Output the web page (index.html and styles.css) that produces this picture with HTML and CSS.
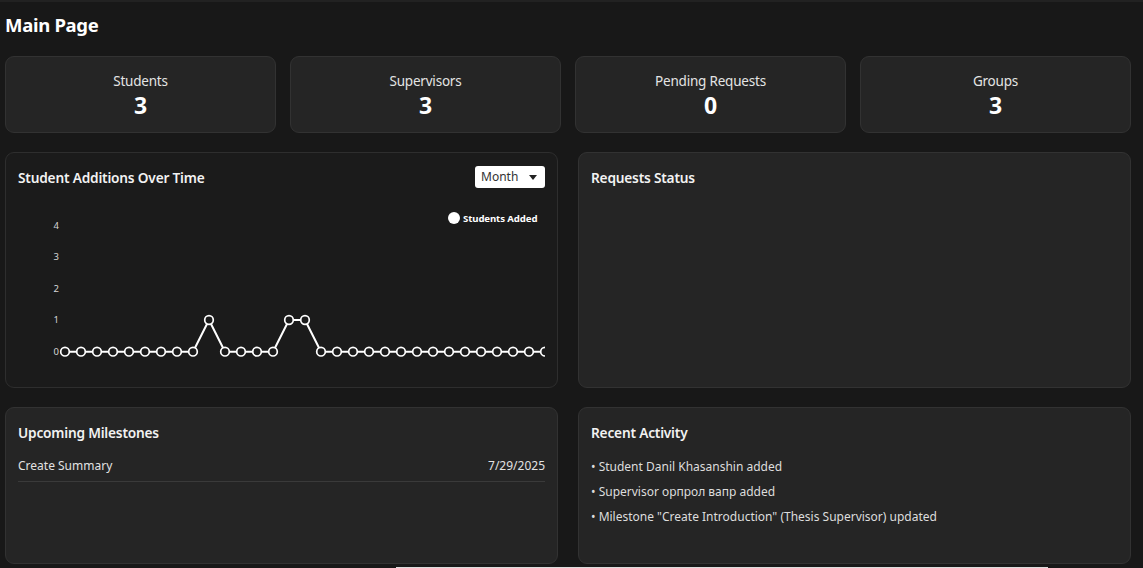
FILE: index.html
```html
<!DOCTYPE html>
<html lang="en">
<head>
<meta charset="utf-8">
<title>Main Page</title>
<link rel="stylesheet" href="styles.css">
</head>
<body>
<div class="page">
  <h1 class="page-title">Main Page</h1>

  <div class="stats">
    <div class="stat-card"><div class="stat-label">Students</div><div class="stat-value">3</div></div>
    <div class="stat-card"><div class="stat-label">Supervisors</div><div class="stat-value">3</div></div>
    <div class="stat-card"><div class="stat-label">Pending Requests</div><div class="stat-value">0</div></div>
    <div class="stat-card"><div class="stat-label">Groups</div><div class="stat-value">3</div></div>
  </div>

  <div class="row row-charts">
    <div class="card card-dark">
      <div class="card-header">
        <h2 class="card-title">Student Additions Over Time</h2>
        <div class="select">Month<span class="caret"></span></div>
      </div>
      <svg class="chart" width="527" height="186" viewBox="0 0 527 186">
        <g class="axis-labels">
          <text x="41" y="40.5">4</text>
          <text x="41" y="71.5">3</text>
          <text x="41" y="103.5">2</text>
          <text x="41" y="135">1</text>
          <text x="41" y="166.5">0</text>
        </g>
        <circle cx="436" cy="30" r="6" fill="#fff"/>
        <text class="legend" x="445" y="33.5">Students Added</text>
        <polyline class="line" points="47,163.7 63,163.7 79,163.7 95,163.7 111,163.7 127,163.7 143,163.7 159,163.7 175,163.7 191,132 207,163.7 223,163.7 239,163.7 255,163.7 271,132 287,132 303,163.7 319,163.7 335,163.7 351,163.7 367,163.7 383,163.7 399,163.7 415,163.7 431,163.7 447,163.7 463,163.7 479,163.7 495,163.7 511,163.7 527,163.7"/>
        <g class="dots">
          <circle cx="47" cy="163.7" r="4.3"/><circle cx="63" cy="163.7" r="4.3"/><circle cx="79" cy="163.7" r="4.3"/><circle cx="95" cy="163.7" r="4.3"/><circle cx="111" cy="163.7" r="4.3"/><circle cx="127" cy="163.7" r="4.3"/><circle cx="143" cy="163.7" r="4.3"/><circle cx="159" cy="163.7" r="4.3"/><circle cx="175" cy="163.7" r="4.3"/><circle cx="191" cy="132" r="4.3"/><circle cx="207" cy="163.7" r="4.3"/><circle cx="223" cy="163.7" r="4.3"/><circle cx="239" cy="163.7" r="4.3"/><circle cx="255" cy="163.7" r="4.3"/><circle cx="271" cy="132" r="4.3"/><circle cx="287" cy="132" r="4.3"/><circle cx="303" cy="163.7" r="4.3"/><circle cx="319" cy="163.7" r="4.3"/><circle cx="335" cy="163.7" r="4.3"/><circle cx="351" cy="163.7" r="4.3"/><circle cx="367" cy="163.7" r="4.3"/><circle cx="383" cy="163.7" r="4.3"/><circle cx="399" cy="163.7" r="4.3"/><circle cx="415" cy="163.7" r="4.3"/><circle cx="431" cy="163.7" r="4.3"/><circle cx="447" cy="163.7" r="4.3"/><circle cx="463" cy="163.7" r="4.3"/><circle cx="479" cy="163.7" r="4.3"/><circle cx="495" cy="163.7" r="4.3"/><circle cx="511" cy="163.7" r="4.3"/><circle cx="527" cy="163.7" r="4.3"/>
        </g>
      </svg>
    </div>
    <div class="card">
      <div class="card-header">
        <h2 class="card-title">Requests Status</h2>
      </div>
    </div>
  </div>

  <div class="row row-bottom">
    <div class="card">
      <div class="card-header">
        <h2 class="card-title">Upcoming Milestones</h2>
      </div>
      <div class="milestone">
        <span>Create Summary</span>
        <span>7/29/2025</span>
      </div>
    </div>
    <div class="card">
      <div class="card-header">
        <h2 class="card-title">Recent Activity</h2>
      </div>
      <ul class="activity">
        <li>• Student Danil Khasanshin added</li>
        <li>• Supervisor орпрол вапр added</li>
        <li>• Milestone "Create Introduction" (Thesis Supervisor) updated</li>
      </ul>
    </div>
  </div>
  <div class="bottom-bar"></div>
</div>
</body>
</html>
```

FILE: styles.css
```css
* { box-sizing: border-box; }
html, body {
  margin: 0;
  padding: 0;
  background: #181818;
  height: 100%;
  overflow: hidden;
}
body {
  font-family: "Noto Sans", "Open Sans", sans-serif;
  color: #e6e6e6;
  border-top: 2px solid #222222;
}
.page {
  padding: 0 12px 0 5px;
}
.page-title {
  margin: 0;
  height: 54px;
  line-height: 46px;
  font-size: 18.5px;
  font-weight: 700;
  color: #ffffff;
  letter-spacing: -0.3px;
}
.stats {
  display: grid;
  grid-template-columns: repeat(4, 1fr);
  gap: 14px;
}
.stat-card {
  height: 77px;
  background: #252525;
  border: 1px solid #323232;
  border-radius: 9px;
  display: flex;
  flex-direction: column;
  align-items: center;
  justify-content: center;
  padding-top: 1px;
}
.stat-label {
  font-size: 13.5px;
  line-height: 20px;
  color: #e4e4e4;
  letter-spacing: -0.2px;
}
.stat-value {
  font-size: 23px;
  line-height: 29px;
  font-weight: 700;
  color: #ffffff;
}
.row {
  display: grid;
  grid-template-columns: 1fr 1fr;
  gap: 20px;
}
.row-charts {
  margin-top: 19px;
  height: 236px;
}
.row-bottom {
  margin-top: 19px;
  height: 157px;
}
.card {
  background: #252525;
  border: 1px solid #323232;
  border-radius: 9px;
  padding: 13px 12px;
  display: flex;
  flex-direction: column;
}
.card-dark {
  background: #1b1b1b;
  border-color: #2e2e2e;
}
.card-header {
  display: flex;
  justify-content: space-between;
  align-items: center;
  height: 22px;
  flex: none;
}
.card-title {
  margin: 0;
  font-size: 13.7px;
  font-weight: 600;
  color: #f2f2f2;
  letter-spacing: -0.2px;
}
.select {
  width: 70px;
  height: 22px;
  background: #ffffff;
  border-radius: 3px;
  color: #333333;
  font-size: 12px;
  line-height: 22px;
  padding-left: 6px;
  position: relative;
}
.caret {
  position: absolute;
  right: 8px;
  top: 9px;
  border-left: 4px solid transparent;
  border-right: 4px solid transparent;
  border-top: 5px solid #222222;
}
.chart {
  display: block;
  overflow: hidden;
}
.axis-labels text {
  font-family: "Noto Sans", sans-serif;
  font-size: 9.5px;
  fill: #d6d6d6;
  text-anchor: end;
}
.legend {
  font-family: "Noto Sans", sans-serif;
  font-size: 9.6px;
  font-weight: 700;
  fill: #ffffff;
  letter-spacing: -0.1px;
}
.line {
  fill: none;
  stroke: #ffffff;
  stroke-width: 2;
  stroke-linejoin: round;
}
.dots circle {
  fill: #1b1b1b;
  stroke: #ffffff;
  stroke-width: 1.7;
}
.milestone {
  display: flex;
  justify-content: space-between;
  align-items: center;
  margin-top: 12px;
  height: 27px;
  padding-bottom: 5px;
  border-bottom: 1px solid #3a3a3a;
  font-size: 12px;
  color: #e2e2e2;
}
.activity {
  list-style: none;
  margin: 11px 0 0;
  padding: 0;
  font-size: 12px;
  color: #dddddd;
}
.activity li {
  height: 25px;
  line-height: 25px;
}
.bottom-bar {
  margin: 3px 0 0 391px;
  width: 652px;
  height: 3px;
  background: #dcdcdc;
}
```
